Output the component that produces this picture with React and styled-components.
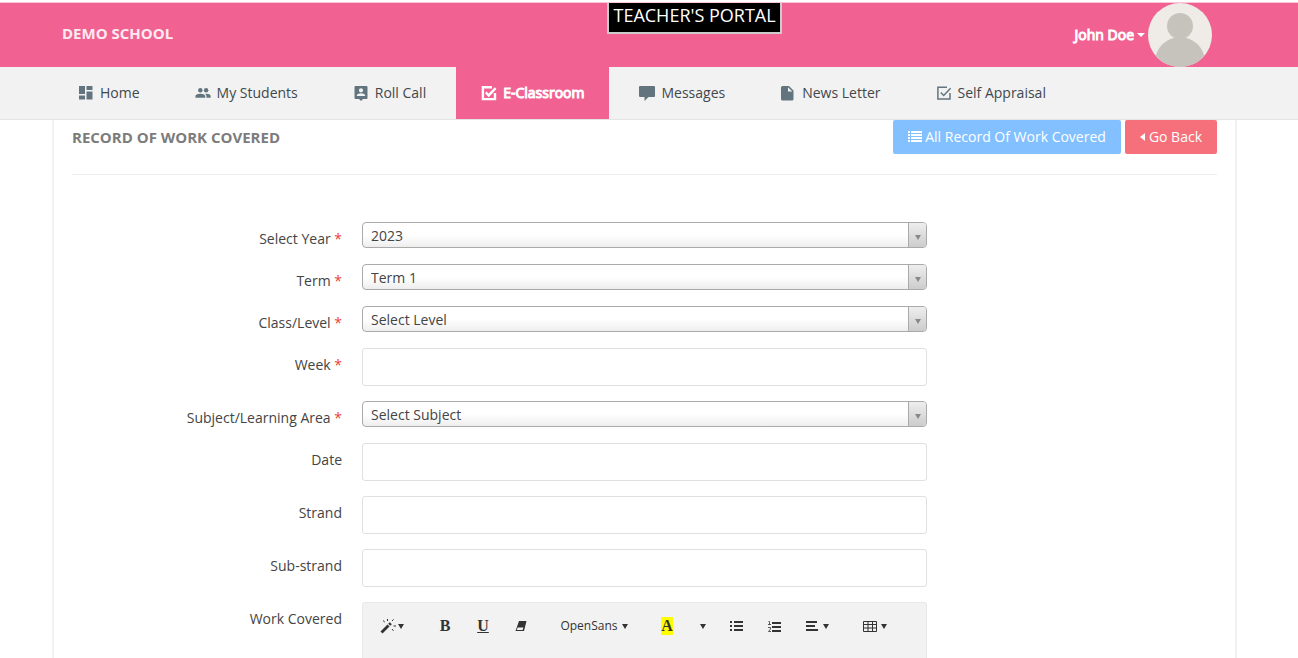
import React from "react";
import styled, { createGlobalStyle, css } from "styled-components";

const GlobalStyle = createGlobalStyle`
  *, *::before, *::after { box-sizing: border-box; }
  body {
    margin: 0;
    background: #fff;
    color: #444;
    font-family: "Open Sans", sans-serif;
    font-size: 14px;
    line-height: 20px;
  }
  button, input, select { font: inherit; color: inherit; }
`;

const Page = styled.div`
  display: flex;
  flex-direction: column;
  min-height: 100vh;
`;

const Header = styled.header`
  display: grid;
  grid-template-columns: 545fr auto 430fr;
  height: 67px;
  padding: 1px 86px 0 62px;
  border-top: 2px solid #fff;
  background: #f16292;
  box-shadow: inset 0 1px #f8c6d7;
  color: #fff;
`;

const Brand = styled.a`
  align-self: center;
  padding-bottom: 4px;
  color: #fdebf1;
  font-size: 15px;
  font-weight: 700;
  text-decoration: none;
`;

const PortalBadge = styled.div`
  align-self: start;
  padding: 0 4px 4px;
  border: 2px solid #ccc;
  border-top: 0;
  background: #000;
  font-size: 18px;
  line-height: 25px;
`;

const UserMenu = styled.button`
  display: flex;
  align-items: center;
  justify-self: end;
  gap: 3px;
  height: 64px;
  padding: 0;
  border: 0;
  background: none;
  color: #fff;
  -webkit-text-stroke: 1px #fff;
`;

const Caret = styled.span`
  width: 0;
  height: 0;
  border: ${(p) => p.$size || 3}px solid transparent;
  border-top: ${(p) => (p.$size || 3) + (p.$tall ? 2 : 0)}px solid currentColor;
  border-bottom: 0;
`;

const Nav = styled.nav`
  display: flex;
  gap: 5px;
  height: 53px;
  padding-left: 53px;
  border-bottom: 1px solid #e4e4e4;
  background: #f2f2f2;
`;

const NavLink = styled.a`
  display: flex;
  align-items: center;
  gap: 6px;
  padding: 0 25px;
  color: #41484c;
  text-decoration: none;
  svg { color: #62757f; }
  ${(p) =>
    p.$active &&
    css`
      background: #f16292;
      color: #fff;
      -webkit-text-stroke: 1px #fff;
      svg { color: #fff; stroke: #fff; }
    `}
`;

const Card = styled.main`
  flex: 1;
  margin: 0 61px 0 52px;
  padding: 0 18px;
  border: solid #f2f2f2;
  border-width: 0 2px;
`;

const TitleBar = styled.div`
  display: flex;
  justify-content: space-between;
  height: 55px;
  margin-bottom: 47px;
  border-bottom: 1px solid #eee;
`;

const Title = styled.h1`
  margin: 0;
  padding-top: 7px;
  color: #7c7c7c;
  font-size: 15px;
  font-weight: 700;
  line-height: 20px;
`;

const Actions = styled.div`
  display: flex;
  gap: 4px;
`;

const ActionButton = styled.button`
  display: flex;
  align-items: center;
  gap: 3px;
  height: 34px;
  padding: 0 15px;
  border: 0;
  border-radius: 2px;
  background: ${(p) => p.$color};
  color: #fff;
`;

const Form = styled.form`
  display: grid;
  gap: 15px;
`;

const Row = styled.div`
  display: grid;
  grid-template-columns: 54fr 113fr 54fr;
  column-gap: 20px;
  align-items: start;
`;

const Label = styled.label`
  height: 27px;
  padding-top: 7px;
  text-align: right;
`;

const Required = styled.span`
  color: #f03c3c;
`;

const TextInput = styled.input`
  width: 100%;
  height: 38px;
  padding: 0 12px;
  border: 1px solid #e0e0e0;
  border-radius: 3px;
  background: #fff;
`;

const SelectBox = styled.div`
  position: relative;
  height: 26px;
  border: 1px solid #aaa;
  border-radius: 4px;
  background: linear-gradient(#fff 50%, #eee);
  overflow: hidden;
`;

const Select = styled.select`
  appearance: none;
  display: block;
  width: 100%;
  height: 24px;
  padding: 2px 26px 0 8px;
  border: 0;
  background: none;
`;

const SelectArrow = styled.span`
  position: absolute;
  inset: 0 0 0 auto;
  display: grid;
  place-items: center;
  width: 18px;
  padding-top: 4px;
  border-left: 1px solid #aaa;
  background: linear-gradient(#eee, #ccc);
  color: #888;
  pointer-events: none;
`;

const Toolbar = styled.div`
  display: flex;
  gap: 10px;
  height: 56px;
  padding: 8px 5px 0;
  border: 1px solid #e8e8e8;
  border-bottom: 0;
  border-radius: 3px 3px 0 0;
  background: #f2f2f2;
  color: #333;
`;

const ToolGroup = styled.div`
  display: flex;
  gap: ${(p) => p.$gap || 0}px;
`;

const ToolButton = styled.button`
  display: flex;
  align-items: center;
  justify-content: center;
  gap: ${(p) => p.$gap || 0}px;
  width: ${(p) => (p.$width ? `${p.$width}px` : "auto")};
  height: 30px;
  padding: 0;
  border: 0;
  background: none;
  font-size: 12px;
`;

const Glyph = styled.span`
  font-family: "Liberation Serif", serif;
  font-size: 16px;
  font-weight: 700;
  line-height: 18px;
  text-decoration: ${(p) => (p.$underline ? "underline" : "none")};
  background: ${(p) => (p.$mark ? "#ff0" : "none")};
`;

const Icon = ({ w = 16, h = 16, children, ...rest }) => (
  <svg width={w} height={h} viewBox={`0 0 ${w} ${h}`} fill="currentColor" aria-hidden="true" {...rest}>
    {children}
  </svg>
);

const CheckSquare = ({ bold }) => (
  <Icon w={16} h={16} fill="none" strokeWidth={bold ? 2.4 : 1.5} stroke="currentColor">
    <path d="M11 2.2H1.9V14.1H14V8M4.8 7.4L7.7 10.4L14.6 3.2" />
  </Icon>
);

const icons = {
  home: (
    <Icon>
      <path d="M1 1h6v8H1zM8.500 1h6v4h-6zM8.500 6.500h6v8h-6zM1 10.500h6v4H1z" />
    </Icon>
  ),
  people: (
    <Icon h={12} viewBox="0 2 18 12">
      <circle cx="6" cy="5" r="2.5" />
      <circle cx="12.5" cy="5" r="2.5" />
      <path d="M.5 13.4v-1.8C.5 9.800 3.800 8.900 6 8.900s5.500.9 5.500 2.700v1.800zM12.900 13.400v-1.800c0-1-.5-1.900-1.300-2.500 2.600-.5 6 .5 6 2.500v1.800z" />
    </Icon>
  ),
  roll: (
    <Icon>
      <path
        fillRule="evenodd"
        d="M2.500 1h11a1 1 0 0 1 1 1v11a1 1 0 0 1-1 1H10l-2 2-2-2H2.500a1 1 0 0 1-1-1V2a1 1 0 0 1 1-1zM8 3.200a2.100 2.100 0 1 0 0 4.200 2.100 2.100 0 0 0 0-4.200zM3.800 11h8.400v-.6c0-1.400-2.800-2.200-4.200-2.200s-4.200.8-4.200 2.200z"
      />
    </Icon>
  ),
  messages: (
    <Icon>
      <path d="M1 1h14a1 1 0 0 1 1 1v9a1 1 0 0 1-1 1H9.500L5.500 16v-4H1a1 1 0 0 1-1-1V2a1 1 0 0 1 1-1z" />
    </Icon>
  ),
  news: (
    <Icon>
      <path fillRule="evenodd" d="M2.500 1H9l4.500 4.500v8.500A1.500 1.500 0 0 1 12 15.500H2.500A1.500 1.500 0 0 1 1 14V2.500A1.500 1.500 0 0 1 2.500 1zM8 2.200v4.300h4.300z" />
    </Icon>
  ),
};

const navItems = [
  { label: "Home", icon: icons.home },
  { label: "My Students", icon: icons.people },
  { label: "Roll Call", icon: icons.roll },
  { label: "E-Classroom", icon: <CheckSquare bold />, active: true },
  { label: "Messages", icon: icons.messages },
  { label: "News Letter", icon: icons.news },
  { label: "Self Appraisal", icon: <CheckSquare /> },
];

const fields = [
  { id: "year", label: "Select Year", required: true, options: ["2023"] },
  { id: "term", label: "Term", required: true, options: ["Term 1"] },
  { id: "level", label: "Class/Level", required: true, options: ["Select Level"] },
  { id: "week", label: "Week", required: true },
  { id: "subject", label: "Subject/Learning Area", required: true, options: ["Select Subject"] },
  { id: "date", label: "Date" },
  { id: "strand", label: "Strand" },
  { id: "substrand", label: "Sub-strand" },
];

const Field = ({ id, label, required, options }) => (
  <Row>
    <Label htmlFor={id}>
      {label} {required && <Required>*</Required>}
    </Label>
    {options ? (
      <SelectBox>
        <Select id={id}>
          {options.map((o) => (
            <option key={o}>{o}</option>
          ))}
        </Select>
        <SelectArrow>
          <Caret $tall />
        </SelectArrow>
      </SelectBox>
    ) : (
      <TextInput id={id} type="text" />
    )}
  </Row>
);

const EditorToolbar = () => (
  <Toolbar role="toolbar" aria-labelledby="work-label">
    <ToolGroup>
      <ToolButton type="button" $width={48} aria-label="Style">
        <Icon w={18} h={16}>
          <path d="M.5 13.500L7.500 6.500l2 2L2.500 15.500z" />
          <path d="M8.200 5.800l1.600-1.600 2 2-1.600 1.600z" />
          <path d="M7.500 1v2M3 2.500l1.800 1.600M12 3l1.600-1.600M13.500 8H16M12 11l1.500 1.800" stroke="currentColor" fill="none" />
        </Icon>
        <Caret $tall />
      </ToolButton>
    </ToolGroup>
    <ToolGroup>
      <ToolButton type="button" $width={38}><Glyph>B</Glyph></ToolButton>
      <ToolButton type="button" $width={38}><Glyph $underline>U</Glyph></ToolButton>
      <ToolButton type="button" $width={38} aria-label="Remove formatting">
        <Icon w={12} h={12}>
          <path fillRule="evenodd" d="M4 1h7.500L9 11H.5zM2.600 7.500L1.800 10h5.800l.8-2.500z" />
        </Icon>
      </ToolButton>
    </ToolGroup>
    <ToolGroup>
      <ToolButton type="button" $width={88} $gap={4}>
        OpenSans
        <Caret $tall />
      </ToolButton>
    </ToolGroup>
    <ToolGroup $gap={12}>
      <ToolButton type="button" $width={38}><Glyph $mark>A</Glyph></ToolButton>
      <ToolButton type="button" $width={10} aria-label="More colors"><Caret $tall /></ToolButton>
    </ToolGroup>
    <ToolGroup>
      <ToolButton type="button" $width={38} aria-label="Unordered list">
        <Icon w={14} h={12}>
          <path d="M0 1h2v2H0zM4 1h9v2H4zM0 5h2v2H0zM4 5h9v2H4zM0 9h2v2H0zM4 9h9v2H4z" />
        </Icon>
      </ToolButton>
      <ToolButton type="button" $width={38} aria-label="Ordered list">
        <Icon w={14} h={12}>
          <path d="M4 2h9v2H4zM4 6h9v2H4zM4 10h9v2H4z" />
          <path d="M.5 1.500h1v3M0 4.500h3M0 7.500h2.500v1.500L.5 11.500H3" fill="none" stroke="currentColor" strokeWidth=".8" />
        </Icon>
      </ToolButton>
      <ToolButton type="button" $width={47} $gap={5} aria-label="Paragraph">
        <Icon w={12} h={12}>
          <path d="M0 1h11v2H0zM0 5h9v2H0zM0 9h12v2H0z" />
        </Icon>
        <Caret $tall />
      </ToolButton>
    </ToolGroup>
    <ToolGroup>
      <ToolButton type="button" $width={47} $gap={4} aria-label="Table">
        <Icon w={14} h={12} fill="none" stroke="currentColor">
          <path d="M.5 1.500h13v10H.5zM.5 4.500h13M.5 8h13M5 1v10M9.500 1v10" />
        </Icon>
        <Caret $tall />
      </ToolButton>
    </ToolGroup>
  </Toolbar>
);

export default function App() {
  return (
    <>
      <GlobalStyle />
      <Page>
        <Header>
          <Brand href="#">DEMO SCHOOL</Brand>
          <PortalBadge>TEACHER'S PORTAL</PortalBadge>
          <UserMenu type="button">
            John Doe
            <Caret $size={4} />
            <Icon w={64} h={64}>
              <clipPath id="avatar">
                <circle cx="32" cy="32" r="32" />
              </clipPath>
              <g clipPath="url(#avatar)" stroke="none">
                <path fill="#efebe6" d="M0 0h64v64H0z" />
                <ellipse cx="32" cy="59" rx="25" ry="25" fill="#c6c3bd" />
                <circle cx="32" cy="23" r="13" fill="#c6c3bd" />
              </g>
            </Icon>
          </UserMenu>
        </Header>
        <Nav>
          {navItems.map(({ label, icon, active }) => (
            <NavLink key={label} href="#" $active={active} aria-current={active ? "page" : undefined}>
              {icon}
              {label}
            </NavLink>
          ))}
        </Nav>
        <Card>
          <TitleBar>
            <Title>RECORD OF WORK COVERED</Title>
            <Actions>
              <ActionButton type="button" $color="#82c0ff">
                <Icon w={14} h={12}>
                  <path d="M0 0h2v2H0zM3 0h11v2H3zM0 3h2v2H0zM3 3h11v2H3zM0 6h2v2H0zM3 6h11v2H3zM0 9h2v2H0zM3 9h11v2H3z" />
                </Icon>
                All Record Of Work Covered
              </ActionButton>
              <ActionButton type="button" $color="#f5707a">
                <Icon w={6} h={8}>
                  <path d="M5 0v8L0 4z" />
                </Icon>
                Go Back
              </ActionButton>
            </Actions>
          </TitleBar>
          <Form>
            {fields.map((f) => (
              <Field key={f.id} {...f} />
            ))}
            <Row>
              <Label as="span" id="work-label">Work Covered</Label>
              <EditorToolbar />
            </Row>
          </Form>
        </Card>
      </Page>
    </>
  );
}
